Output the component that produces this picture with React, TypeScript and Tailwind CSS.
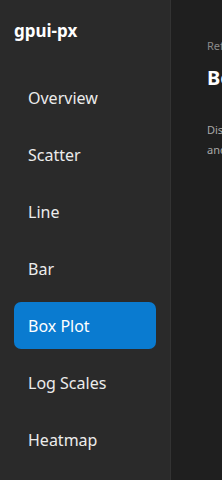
const items = ['Overview', 'Scatter', 'Line', 'Bar', 'Box Plot', 'Log Scales', 'Heatmap'];

export default function App() {
    const active = 'Box Plot';
    return (
        <div
            className="flex h-[480px] w-[222px] overflow-hidden bg-[#1f1f1f] text-[#e8e8e8]"
            style={{fontFamily: '"Noto Sans", "Open Sans", sans-serif'}}
        >
            <aside className="w-[171px] shrink-0 border-r border-[#333333] bg-[#2a2a2a] px-[14px]">
                <div className="pt-[17px] text-[17px] font-bold leading-[28px] text-white">gpui-px</div>
                <nav className="mt-[29px] flex flex-col gap-[10px]">
                    {items.map(item => (
                        <div
                            key={item}
                            className={`flex h-[47px] items-center rounded-[7px] px-[14px] text-[16px] ${
                                item === active ? 'bg-[#0a7bd0] text-white' : 'text-[#ececec]'
                            }`}
                        >
                            {item}
                        </div>
                    ))}
                </nav>
            </aside>
            <main className="min-w-0 flex-1 overflow-hidden whitespace-nowrap pl-[36px] pt-[38px]">
                <div className="text-[11px] leading-[16px] text-[#8a8a8a]">Reference</div>
                <h1 className="mt-[11px] text-[20px] font-bold leading-[26px] text-white">Box Plot</h1>
                <p className="mt-[29px] text-[11px] leading-[20px] text-[#a8a8a8]">
                    Displays distributions with quartiles
                    <br />
                    and outliers.
                </p>
            </main>
        </div>
    );
}
